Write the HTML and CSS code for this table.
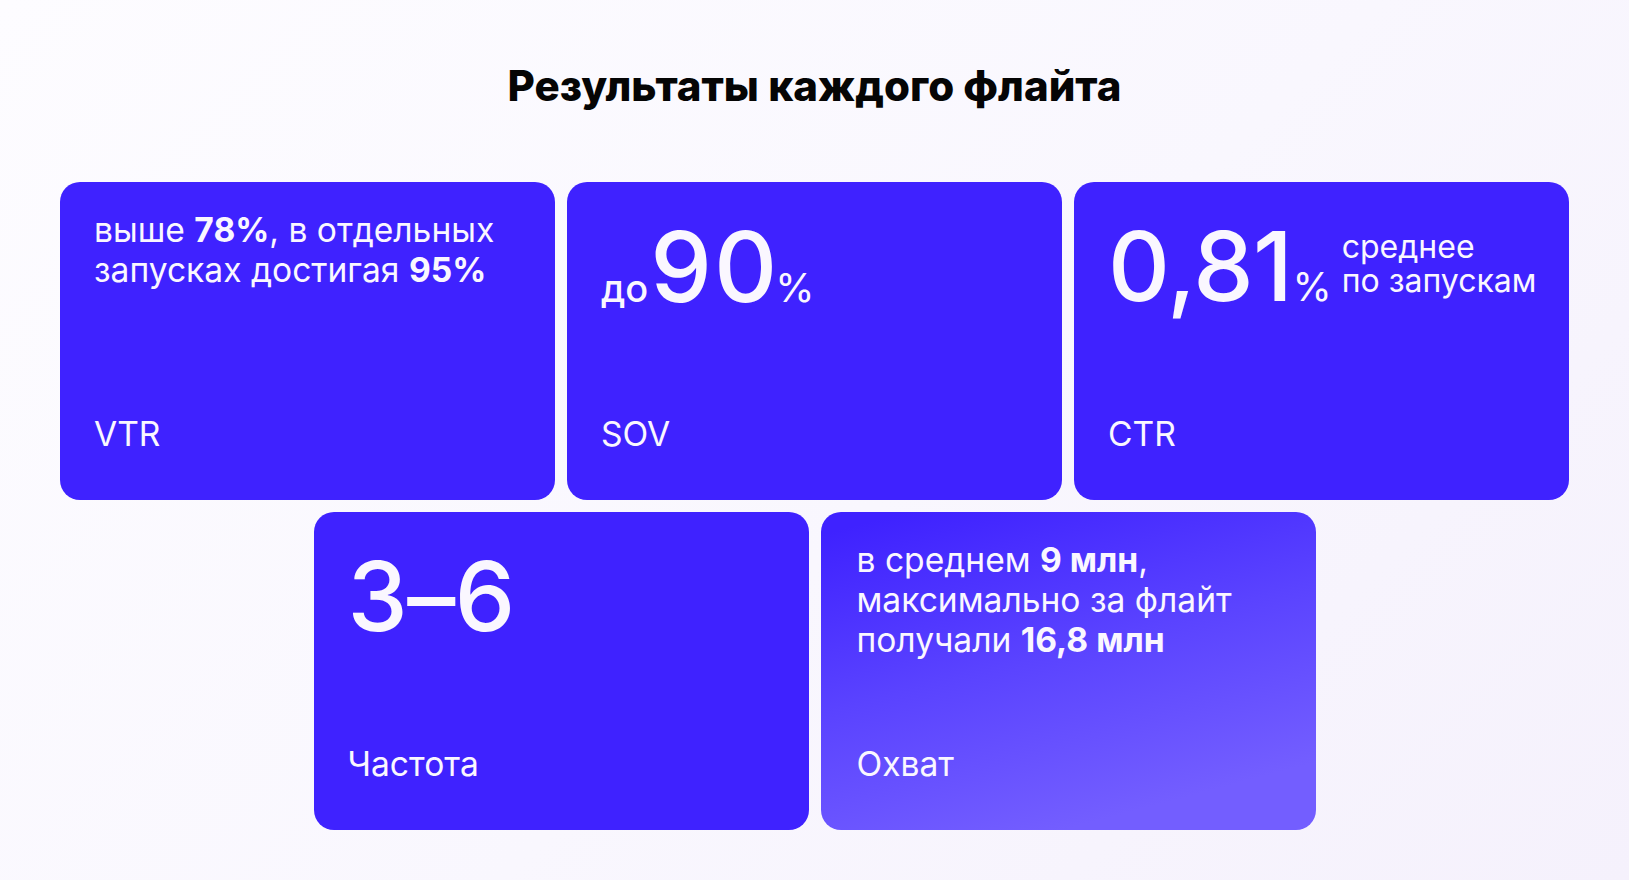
FILE: index.html
```html
<!DOCTYPE html>
<html lang="ru">
<head>
<meta charset="utf-8">
<title>Результаты каждого флайта</title>
<link rel="stylesheet" href="styles.css">
</head>
<body>
<main class="page">
  <h1 class="title">Результаты каждого флайта</h1>
  <section class="grid">
    <article class="card">
      <p class="text">выше <b>78%</b>, в отдельных запусках достигая <b>95%</b></p>
      <p class="label">VTR</p>
    </article>
    <article class="card">
      <div class="big">
        <span class="pre">до</span><span class="num num-wide">90</span><span class="pct">%</span>
      </div>
      <p class="label">SOV</p>
    </article>
    <article class="card">
      <div class="big">
        <span class="num">0,81</span><span class="pct">%</span><span class="side">среднее<br>по запускам</span>
      </div>
      <p class="label">CTR</p>
    </article>
    <article class="card">
      <div class="big">
        <span class="num">3–6</span>
      </div>
      <p class="label">Частота</p>
    </article>
    <article class="card card-grad">
      <p class="text">в среднем <b>9 млн</b>, максимально за флайт получали <b>16,8 млн</b></p>
      <p class="label">Охват</p>
    </article>
  </section>
</main>
</body>
</html>
```
FILE: styles.css
```css
html, body {
  margin: 0;
  padding: 0;
}
body {
  min-height: 880px;
  background: linear-gradient(135deg, #fdfcff 0%, #f9f7fe 55%, #f5f1fc 100%);
  font-family: Inter, "Noto Sans", sans-serif;
  color: #000;
}
.page {
  width: 1509px;
  margin: 0 auto;
  padding-top: 62px;
}
.title {
  margin: 0 0 72px;
  text-align: center;
  font-size: 42px;
  line-height: 48px;
  font-weight: 800;
  color: #050505;
}
.grid {
  display: flex;
  flex-wrap: wrap;
  justify-content: center;
  gap: 12px;
}
.card {
  box-sizing: border-box;
  width: 495px;
  height: 318px;
  padding: 28px 20px 46px 34px;
  border-radius: 20px;
  background: #3f22ff;
  color: #faf7ff;
  display: flex;
  flex-direction: column;
  justify-content: space-between;
}
.card-grad {
  background: linear-gradient(165deg, #3f22ff 5%, #5a43ff 45%, #735eff 85%);
  padding-left: 36px;
}
.text, .label {
  margin: 0;
  font-size: 33.6px;
  line-height: 40px;
  font-weight: 400;
}
.text b {
  font-weight: 700;
}
.big {
  display: flex;
  align-items: baseline;
  margin-top: 8px;
  line-height: 1;
}
.num {
  font-size: 96px;
  font-weight: 500;
  letter-spacing: -0.5px;
}
.num-wide {
  font-size: 98px;
  letter-spacing: 2px;
  margin-right: -4px;
}
.pre {
  font-size: 38px;
  font-weight: 500;
  margin-right: 2px;
}
.pct {
  font-size: 40px;
  font-weight: 400;
}
.side {
  align-self: flex-end;
  margin: 0 0 16px 10px;
  font-size: 32px;
  line-height: 34px;
}
```
